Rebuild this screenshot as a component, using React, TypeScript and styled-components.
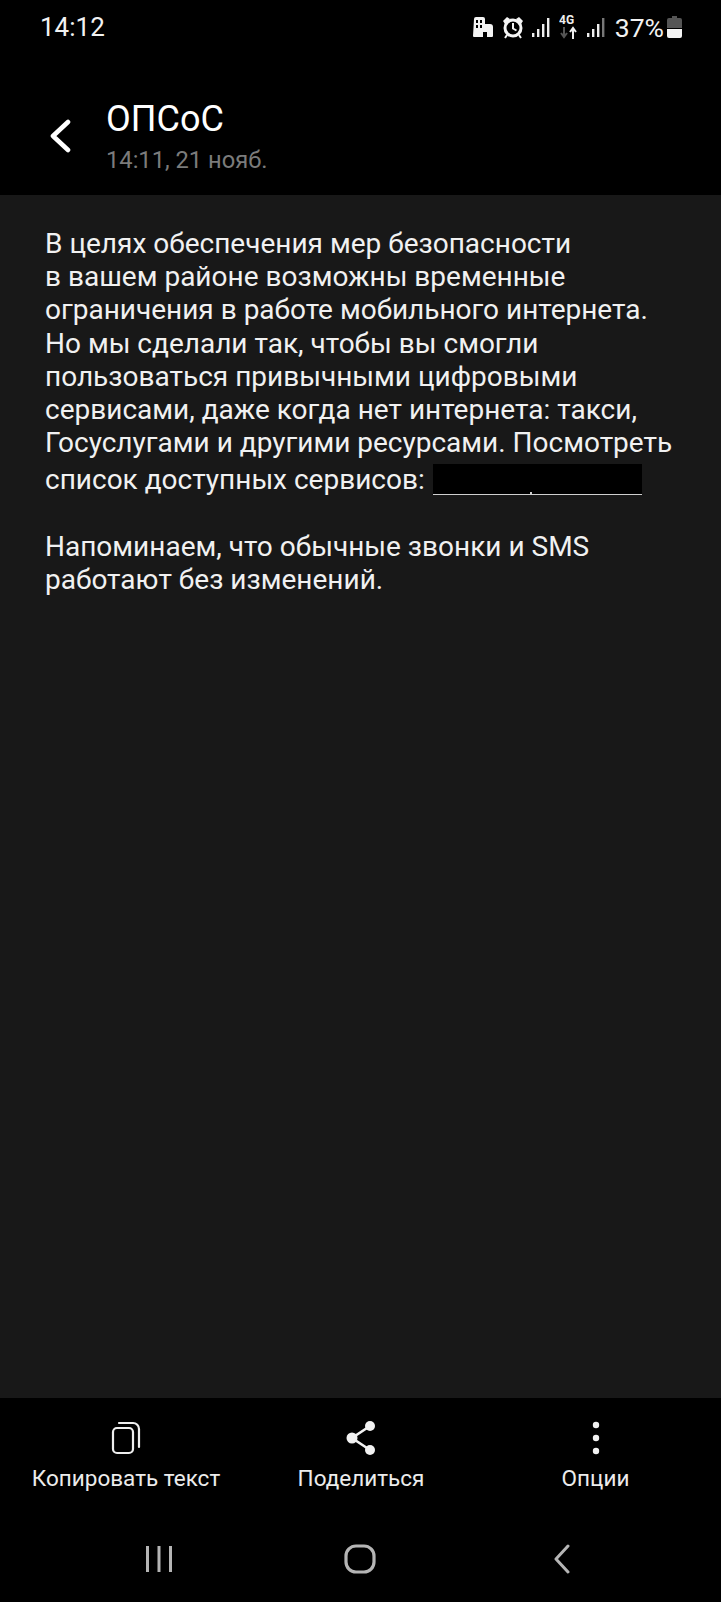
import { createGlobalStyle } from 'styled-components';
import styled from 'styled-components';

const GlobalStyle = createGlobalStyle`
  html, body { margin: 0; padding: 0; background: #000; }
  #root { height: 1602px; }
`;

const Screen = styled.div`
  width: 721px;
  height: 1602px;
  display: flex;
  flex-direction: column;
  background: #000;
  color: #fff;
  font-family: Roboto, "Liberation Sans", sans-serif;
  overflow: hidden;
`;

const StatusBar = styled.div`
  height: 54px;
  padding: 0 39px 0 40px;
  display: flex;
  align-items: center;
  justify-content: space-between;
  font-size: 26px;
  color: #f2f2f2;
`;

const StatusIcons = styled.div`
  display: flex;
  align-items: center;
  gap: 8px;
`;

const Battery = styled.span`
  font-size: 26.5px;
  margin-left: 1px;
`;

const Header = styled.header`
  height: 141px;
  box-sizing: border-box;
  padding: 46px 0 0 49px;
  display: flex;
  align-items: flex-start;
  gap: 34px;
`;

const BackButton = styled.div`
  margin-top: 19px;
  display: flex;
`;

const Title = styled.div`
  font-size: 36px;
  line-height: 38px;
  color: #fff;
`;

const Subtitle = styled.div`
  font-size: 23.7px;
  line-height: 28px;
  margin-top: 8px;
  color: #7b7b7b;
`;

const Body = styled.main`
  flex: 1;
  background: #181818;
  padding: 32px 20px 0 45px;
`;

const Paragraph = styled.p`
  margin: 0 0 33px;
  font-size: 28px;
  line-height: 33.2px;
  color: #f1f1f1;
  white-space: nowrap;
`;

const Redacted = styled.span`
  position: relative;
  display: inline-block;
  width: 209px;
  height: 30px;
  margin: 5px 0 0 1px;
  vertical-align: -6px;
  background: #000;
  border-bottom: 1px solid #cfcfcf;

  &::after {
    content: '';
    position: absolute;
    left: 97px;
    bottom: 0;
    width: 2px;
    height: 2px;
    background: #cfcfcf;
  }
`;

const ActionBar = styled.div`
  height: 125px;
  display: grid;
  grid-template-columns: 252px 218px 1fr;
  padding-top: 18px;
  box-sizing: border-box;
`;

const Action = styled.div`
  display: flex;
  flex-direction: column;
  align-items: center;
  gap: 5px;
  font-size: 22.5px;
  color: #ececec;
  white-space: nowrap;
`;

const ActionIcon = styled.div`
  height: 44px;
  display: flex;
  align-items: center;
`;

const NavBar = styled.div`
  height: 79px;
  box-sizing: border-box;
  display: grid;
  grid-template-columns: repeat(3, 1fr);
  align-items: center;
  justify-items: center;
  padding: 0 58px 8px;
`;

const bars = [
  { x: 0, h: 4 },
  { x: 5, h: 8 },
  { x: 10, h: 13 },
  { x: 15, h: 19 },
];

function Signal({ dim }: { dim?: boolean }) {
  return (
    <svg width="19" height="20" viewBox="0 0 19 20">
      {bars.map((b, i) => (
        <rect
          key={b.x}
          x={b.x}
          y={20 - b.h}
          width="2.4"
          height={b.h}
          fill={dim && i === 3 ? '#777' : '#eee'}
        />
      ))}
    </svg>
  );
}

export default function App() {
  return (
    <Screen>
      <GlobalStyle />
      <StatusBar>
        <span>14:12</span>
        <StatusIcons>
          <svg width="22" height="24" viewBox="0 0 22 24">
            <path
              fill="#f4f4f4"
              fillRule="evenodd"
              d="M2 4a2 2 0 0 1 2-2h7a2 2 0 0 1 2 2v5h5a3 3 0 0 1 3 3v9a1 1 0 0 1-1 1h-5v-5h-4v5H2a1 1 0 0 1-1-1zM4 5v3h2V5zm4 0v3h2V5zM4 10v3h2v-3zm4 0v3h2v-3z"
            />
          </svg>
          <svg width="22" height="24" viewBox="0 0 22 24">
            <circle cx="11" cy="13" r="8" fill="none" stroke="#f4f4f4" strokeWidth="3" />
            <path d="M11 8v5.5l3.5 2" fill="none" stroke="#f4f4f4" strokeWidth="2" />
            <path d="M1 6l4-4 3 2-5 5zM21 6l-4-4-3 2 5 5z" fill="#f4f4f4" />
            <path d="M5 20l-2 3M17 20l2 3" stroke="#f4f4f4" strokeWidth="2" />
          </svg>
          <Signal />
          <svg width="20" height="28" viewBox="0 0 20 28">
            <text x="0" y="11" fontSize="12" fontWeight="700" fill="#eee" fontFamily="Roboto, sans-serif">4G</text>
            <path d="M5 14v10M2 20l3 4 3-4" fill="none" stroke="#555" strokeWidth="2" />
            <path d="M14 26V15M11 19l3-4 3 4" fill="none" stroke="#eee" strokeWidth="2" />
          </svg>
          <Signal dim />
          <Battery>37%</Battery>
          <svg width="15" height="22" viewBox="0 0 15 22" style={{ marginLeft: -5 }}>
            <path d="M5 0h5v2h3a2 2 0 0 1 2 2v8H0V4a2 2 0 0 1 2-2h3z" fill="#555" />
            <path d="M0 13h15v7a2 2 0 0 1-2 2H2a2 2 0 0 1-2-2z" fill="#f4f4f4" />
          </svg>
        </StatusIcons>
      </StatusBar>

      <Header>
        <BackButton>
          <svg width="23" height="34" viewBox="0 0 23 34">
            <path d="M19 3 4 17l15 14" fill="none" stroke="#fff" strokeWidth="4.6" strokeLinecap="round" strokeLinejoin="round" />
          </svg>
        </BackButton>
        <div>
          <Title>ОПСоС</Title>
          <Subtitle>14:11, 21 нояб.</Subtitle>
        </div>
      </Header>

      <Body>
        <Paragraph>
          В целях обеспечения мер безопасности<br />
          в вашем районе возможны временные<br />
          ограничения в работе мобильного интернета.<br />
          Но мы сделали так, чтобы вы смогли<br />
          пользоваться привычными цифровыми<br />
          сервисами, даже когда нет интернета: такси,<br />
          Госуслугами и другими ресурсами. Посмотреть<br />
          список доступных сервисов: <Redacted />
        </Paragraph>
        <Paragraph>
          Напоминаем, что обычные звонки и SMS<br />
          работают без изменений.
        </Paragraph>
      </Body>

      <ActionBar>
        <Action>
          <ActionIcon>
            <svg width="30" height="34" viewBox="0 0 30 34" fill="none" stroke="#eee" strokeWidth="2.2">
              <rect x="2" y="7" width="20" height="25" rx="4" />
              <path d="M8 2h14a6 6 0 0 1 6 6v18" strokeLinecap="round" />
            </svg>
          </ActionIcon>
          Копировать текст
        </Action>
        <Action>
          <ActionIcon>
            <svg width="30" height="36" viewBox="0 0 30 36">
              <path d="M24 6 6 18l18 12" fill="none" stroke="#f2f2f2" strokeWidth="2.6" />
              <circle cx="24" cy="6" r="5" fill="#f2f2f2" />
              <circle cx="6" cy="18" r="5.5" fill="#f2f2f2" />
              <circle cx="24" cy="30" r="5" fill="#f2f2f2" />
            </svg>
          </ActionIcon>
          Поделиться
        </Action>
        <Action>
          <ActionIcon>
            <svg width="8" height="36" viewBox="0 0 8 36" fill="#f2f2f2">
              <circle cx="4" cy="5" r="3.2" />
              <circle cx="4" cy="18" r="3.2" />
              <circle cx="4" cy="31" r="3.2" />
            </svg>
          </ActionIcon>
          Опции
        </Action>
      </ActionBar>

      <NavBar>
        <svg width="28" height="28" viewBox="0 0 28 28" fill="#b5b5b5">
          <rect x="1" y="1" width="3" height="26" />
          <rect x="12.5" y="1" width="3" height="26" />
          <rect x="24" y="1" width="3" height="26" />
        </svg>
        <svg width="32" height="30" viewBox="0 0 32 30" fill="none" stroke="#b5b5b5" strokeWidth="3.2">
          <rect x="2" y="2" width="28" height="26" rx="10" />
        </svg>
        <svg width="18" height="30" viewBox="0 0 18 30" fill="none" stroke="#b5b5b5" strokeWidth="3" strokeLinecap="round" strokeLinejoin="round">
          <path d="M15 2 3 15l12 13" />
        </svg>
      </NavBar>
    </Screen>
  );
}
